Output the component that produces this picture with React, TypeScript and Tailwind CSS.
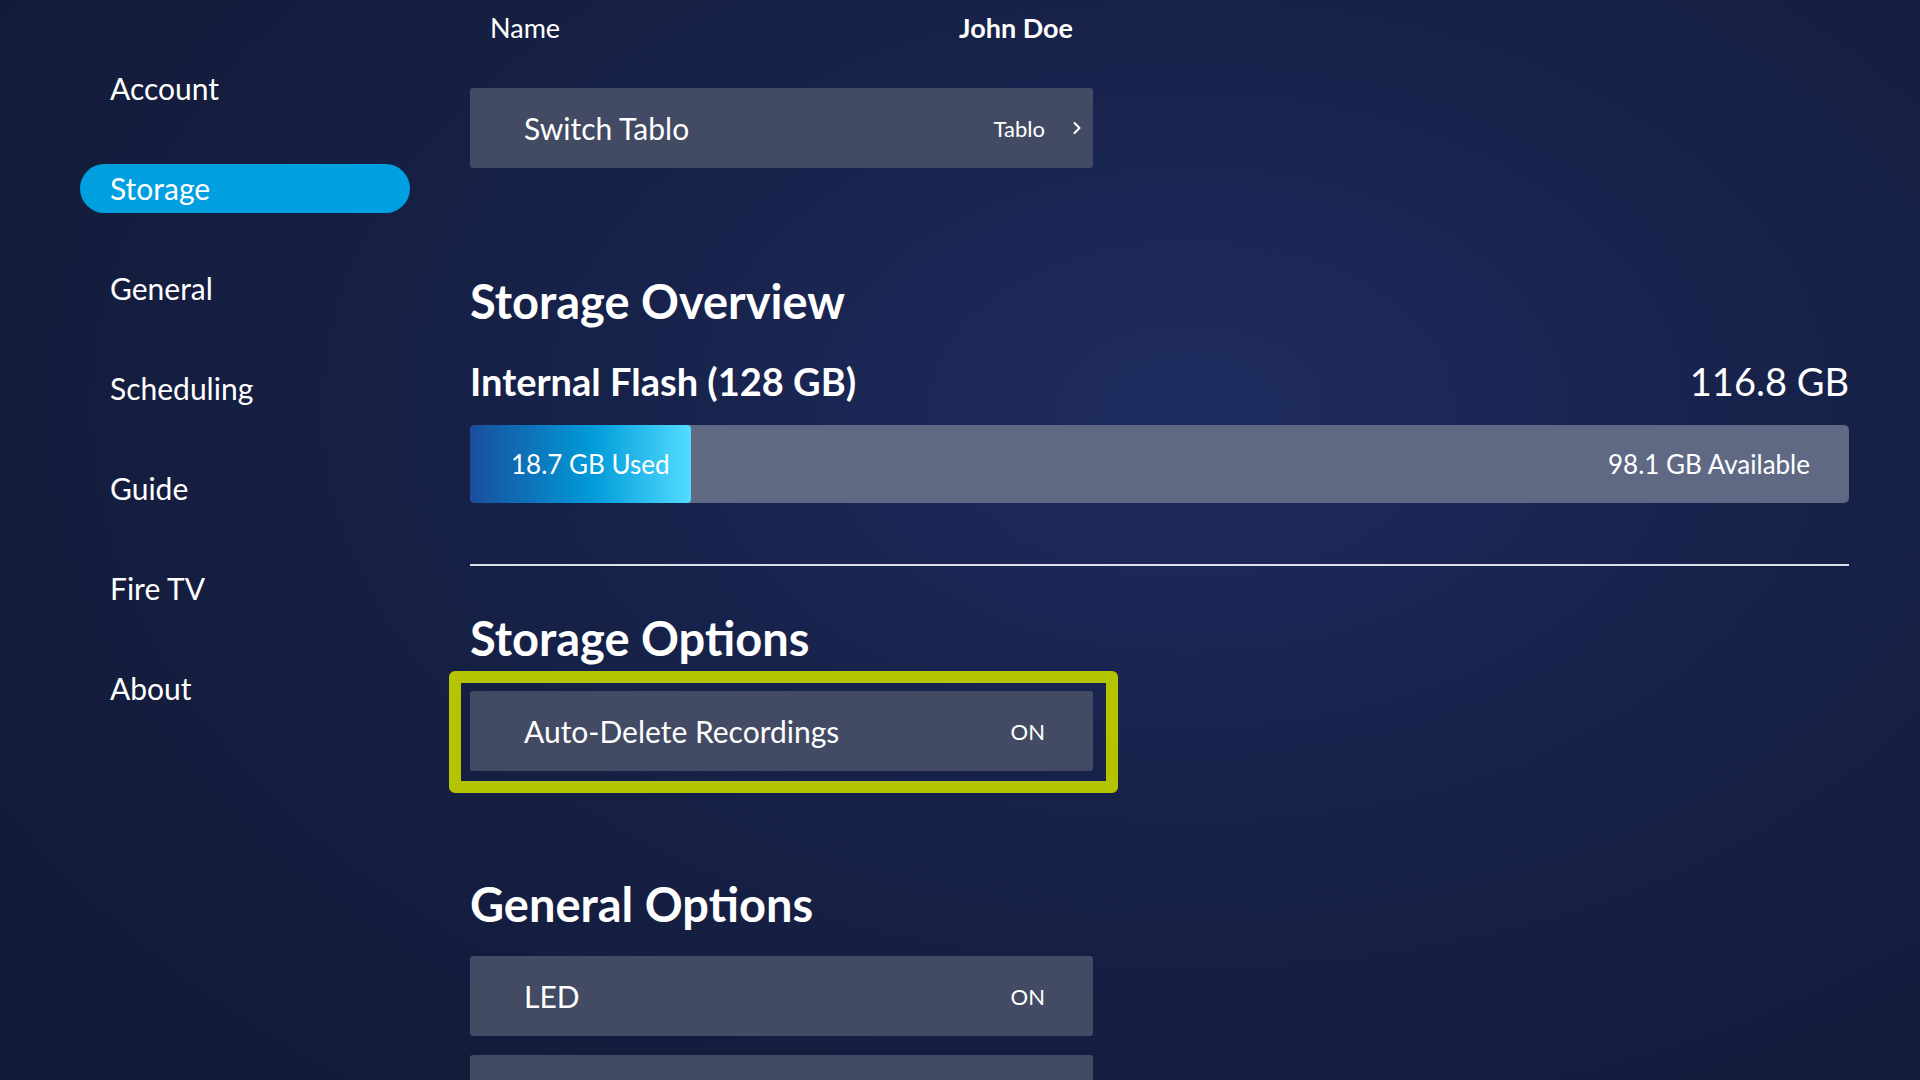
import React from 'react';
import { ChevronRight } from 'lucide-react';

const menu = ['Account', 'Storage', 'General', 'Scheduling', 'Guide', 'Fire TV', 'About'];

const App: React.FC = () => {
  const used = 221;

  return (
    <div className="w-[1920px] h-[1080px] overflow-hidden flex font-[Lato,sans-serif] text-white bg-[radial-gradient(ellipse_70%_80%_at_62%_38%,#1f2c60_0%,#17224a_45%,#131b38_100%)]">
      {/* Sidebar */}
      <nav className="w-[470px] shrink-0 pl-[80px] pt-[64px] flex flex-col gap-[51px]">
        {menu.map((item) => (
          <div
            key={item}
            className={
              item === 'Storage'
                ? 'w-[330px] h-[49px] shrink-0 rounded-full bg-[#009fdf] flex items-center pl-[30px] text-[30px]'
                : 'w-[330px] h-[49px] shrink-0 flex items-center pl-[30px] text-[30px]'
            }
          >
            {item}
          </div>
        ))}
      </nav>

      {/* Content */}
      <main className="w-[1379px] flex flex-col [&>*]:shrink-0">
        <div className="h-[56px] flex items-center pl-[20px] text-[27px]">
          <span className="w-[469px]">Name</span>
          <span className="font-bold">John Doe</span>
        </div>

        <div className="mt-[32px] w-[623px] h-[80px] bg-[#424b63] rounded-[3px] flex items-center pl-[54px] pr-[6px]">
          <span className="text-[30px] flex-1">Switch Tablo</span>
          <span className="text-[22px] mr-[22px]">Tablo</span>
          <ChevronRight className="w-[20px] h-[20px]" strokeWidth={2.5} />
        </div>

        <h2 className="mt-[105px] text-[47px] leading-[56px] font-bold">Storage Overview</h2>

        <div className="mt-[28px] h-[48px] flex items-center justify-between">
          <span className="text-[38px] font-bold">Internal Flash (128 GB)</span>
          <span className="text-[38px]">116.8 GB</span>
        </div>

        <div className="mt-[20px] h-[78px] rounded-[5px] bg-[#5f6984] flex items-center overflow-hidden">
          <div
            className="h-full rounded-r-[4px] flex items-center pl-[41px] text-[26px] bg-[linear-gradient(90deg,#1a4e9c_0%,#009ad9_55%,#53dcff_100%)]"
            style={{ width: used }}
          >
            <span className="whitespace-nowrap">18.7 GB Used</span>
          </div>
          <span className="ml-auto mr-[39px] text-[26px]">98.1 GB Available</span>
        </div>

        <div className="mt-[61px] h-[2px] bg-[#dcdfe8]" />

        <h2 className="mt-[44px] text-[47px] leading-[56px] font-bold">Storage Options</h2>

        <div className="mt-[5px] -ml-[21px] w-[669px] border-[12px] border-[#b4c400] rounded-[6px] pt-[8px] pb-[10px] pl-[9px]">
          <div className="w-[623px] h-[80px] bg-[#424b63] rounded-[3px] flex items-center pl-[54px] pr-[48px]">
            <span className="text-[30px] flex-1">Auto-Delete Recordings</span>
            <span className="text-[22px]">ON</span>
          </div>
        </div>

        <h2 className="mt-[83px] text-[47px] leading-[56px] font-bold">General Options</h2>

        <div className="mt-[24px] w-[623px] h-[80px] bg-[#424b63] rounded-[3px] flex items-center pl-[54px] pr-[48px]">
          <span className="text-[30px] flex-1">LED</span>
          <span className="text-[22px]">ON</span>
        </div>

        <div className="mt-[19px] w-[623px] h-[80px] bg-[#424b63] rounded-[3px]" />
      </main>
    </div>
  );
};

export default App;
